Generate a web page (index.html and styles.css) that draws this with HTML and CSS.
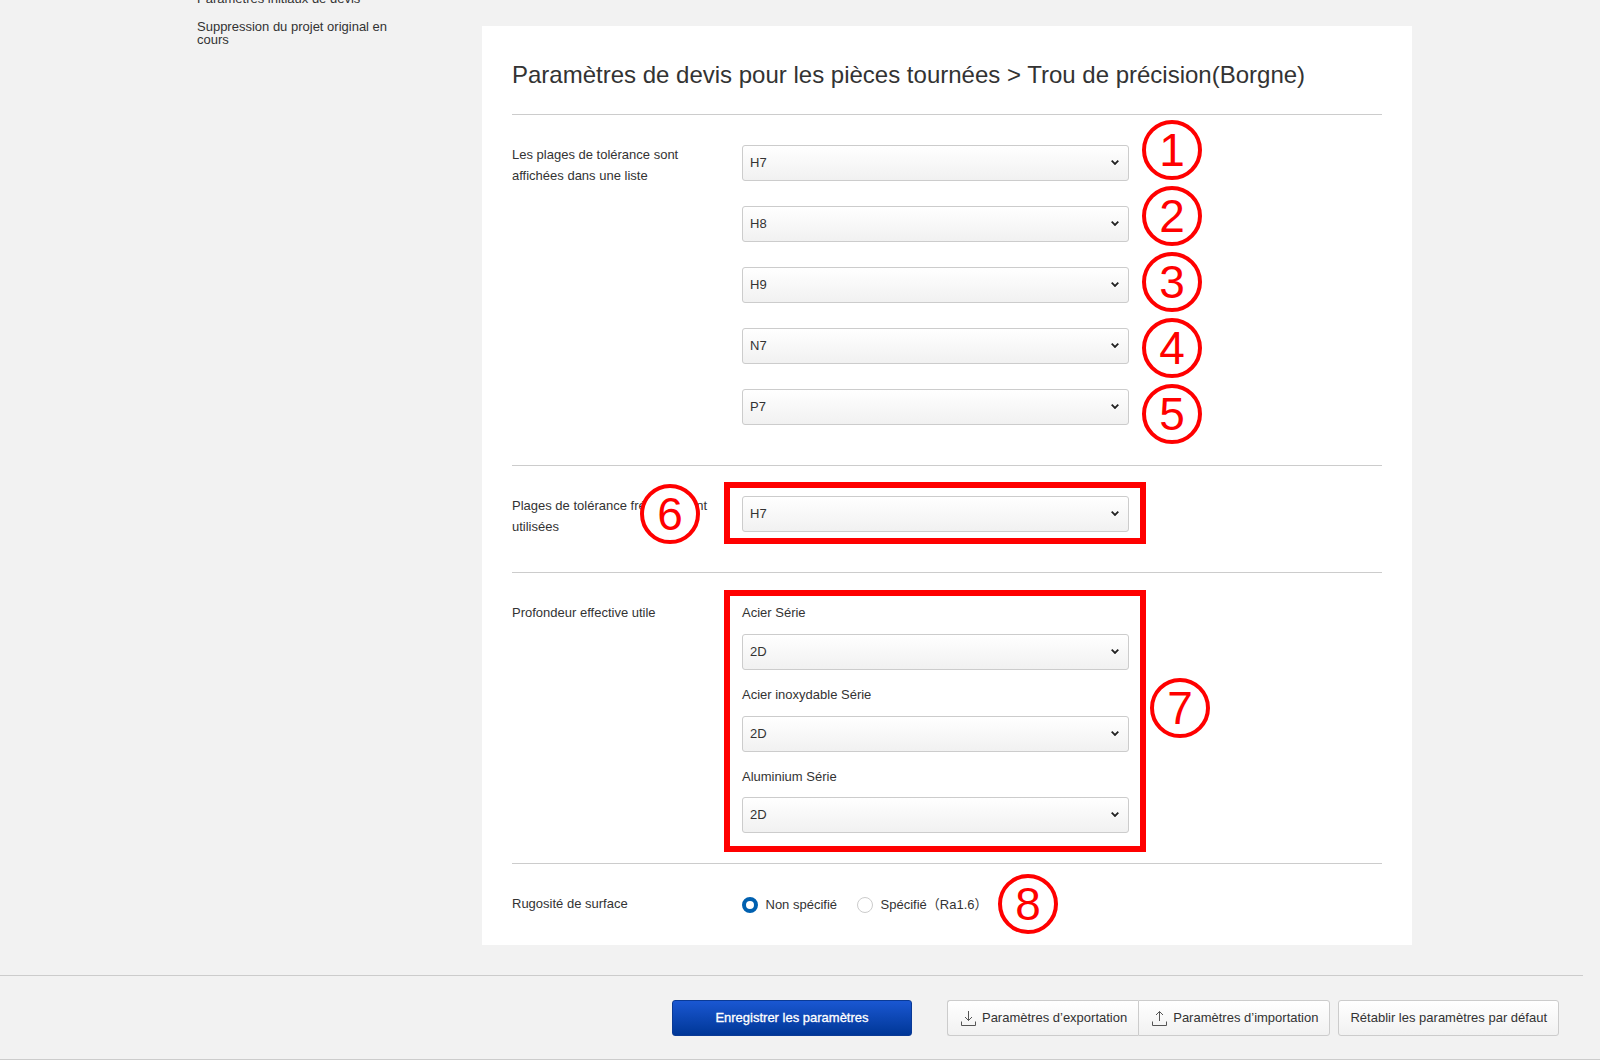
FILE: index.html
```html
<!DOCTYPE html>
<html lang="fr">
<head>
    <meta charset="UTF-8">
    <meta name="viewport" content="width=device-width, initial-scale=1">
    <title>Paramètres de devis</title>
    <link rel="stylesheet" href="styles.css">
</head>
<body>
    <div class="page">
        <div class="content">
            <aside class="sidebar">
                <a href="#" class="side-link">Paramètres initiaux de devis</a>
                <a href="#" class="side-link">Suppression du projet original en cours</a>
            </aside>
            <main class="panel">
                <h1>Paramètres de devis pour les pièces tournées &gt; Trou de précision(Borgne)</h1>

                <section class="row row-list">
                    <div class="row-label">Les plages de tolérance sont affichées dans une liste</div>
                    <div class="row-field">
                        <select><option>H7</option></select>
                        <select><option>H8</option></select>
                        <select><option>H9</option></select>
                        <select><option>N7</option></select>
                        <select><option>P7</option></select>
                    </div>
                </section>

                <section class="row">
                    <div class="row-label">Plages de tolérance fréquemment utilisées</div>
                    <div class="row-field">
                        <select><option>H7</option></select>
                    </div>
                </section>

                <section class="row row-depth">
                    <div class="row-label">Profondeur effective utile</div>
                    <div class="row-field">
                        <div class="sub-label">Acier Série</div>
                        <select><option>2D</option></select>
                        <div class="sub-label">Acier inoxydable Série</div>
                        <select><option>2D</option></select>
                        <div class="sub-label sub-label-last">Aluminium Série</div>
                        <select><option>2D</option></select>
                    </div>
                </section>

                <section class="row row-radio">
                    <div class="row-label">Rugosité de surface</div>
                    <div class="radio-group">
                        <label class="radio"><input type="radio" name="ra" checked>Non spécifié</label>
                        <label class="radio"><input type="radio" name="ra">Spécifié（Ra1.6）</label>
                    </div>
                </section>
            </main>
        </div>

        <footer class="actions">
            <button class="btn-save">Enregistrer les paramètres</button>
            <div class="btn-group">
                <button class="btn">
                    <svg class="btn-icon" width="15" height="16" viewBox="0 0 15 16"><path d="M7.5 1v9.5M4 7l3.5 3.5L11 7M.5 11.5v4h14v-4" /></svg>
                    Paramètres d’exportation
                </button>
                <button class="btn">
                    <svg class="btn-icon" width="15" height="16" viewBox="0 0 15 16"><path d="M7.5 11V1.5M4 5l3.5-3.5L11 5M.5 11.5v4h14v-4" /></svg>
                    Paramètres d’importation
                </button>
            </div>
            <button class="btn btn-reset">Rétablir les paramètres par défaut</button>
        </footer>
    </div>

    <!-- annotations drawn over the screenshot -->
    <div class="mark mark-1">1</div>
    <div class="mark mark-2">2</div>
    <div class="mark mark-3">3</div>
    <div class="mark mark-4">4</div>
    <div class="mark mark-5">5</div>
    <div class="mark mark-6">6</div>
    <div class="mark mark-7">7</div>
    <div class="mark mark-8">8</div>
    <div class="red-box red-box-a"></div>
    <div class="red-box red-box-b"></div>
</body>
</html>
```

FILE: styles.css
```css
* {
    box-sizing: border-box;
}

html, body {
    margin: 0;
    padding: 0;
    height: 1060px;
    overflow: hidden;
}

body {
    font-family: "Liberation Sans", "Noto Sans CJK JP", Arial, sans-serif;
    font-size: 13px;
    color: #333;
    background-color: #f2f2f2;
}

.page {
    width: 1600px;
    height: 1060px;
    border-bottom: 1px solid #ccc;
}

.content {
    display: flex;
    align-items: flex-start;
}

.sidebar {
    width: 482px;
    padding-left: 197px;
    padding-right: 90px;
    margin-top: -8px;
}

.side-link {
    display: block;
    color: #333;
    text-decoration: none;
    font-size: 13px;
    line-height: 13px;
    margin-bottom: 15px;
}

.panel {
    width: 930px;
    height: 919px;
    margin-top: 26px;
    padding: 0 30px;
    background-color: #fff;
}

h1 {
    margin: 0;
    height: 88px;
    padding-top: 34px;
    font-size: 24px;
    line-height: 30px;
    font-weight: 400;
    color: #333;
}

.row {
    display: flex;
    border-top: 1px solid #ccc;
    padding: 30px 0 40px;
}

/* label may run taller than the select beside it, it doesn't push the row */
.row-label {
    width: 230px;
    height: 36px;
    margin-top: -1px;
    padding-right: 30px;
    line-height: 21px;
    flex-shrink: 0;
}

.row-field {
    display: flex;
    flex-direction: column;
    width: 387px;
}

.row-list .row-field {
    gap: 25px;
}

.row-depth {
    padding-bottom: 30px;
}

.sub-label {
    line-height: 21px;
    margin-top: -1px;
    margin-bottom: 11px;
}

select + .sub-label {
    margin-top: 14px;
}

.sub-label-last {
    margin-bottom: 10px;
}

select {
    display: block;
    appearance: none;
    width: 387px;
    height: 36px;
    padding: 0 24px 2px 7px;
    border: 1px solid #ccc;
    border-radius: 3px;
    background-color: #f6f6f6;
    background-image: url("data:image/svg+xml,%3Csvg xmlns='http://www.w3.org/2000/svg' width='8' height='5' viewBox='0 0 8 5'%3E%3Cpath d='M.7.7L4 4l3.3-3.3' fill='none' stroke='%23222' stroke-width='1.8'/%3E%3C/svg%3E"), linear-gradient(#fff, #f1f1f1);
    background-repeat: no-repeat;
    background-position: right 9px top 14px, 0 0;
    font-family: inherit;
    font-size: 13px;
    color: #333;
}

.row-radio {
    padding: 30px 0 0;
    align-items: flex-start;
}

.radio-group {
    display: flex;
    gap: 20px;
    line-height: 21px;
}

.radio {
    display: flex;
    align-items: center;
    gap: 7.5px;
}

.radio input {
    appearance: none;
    width: 16px;
    height: 16px;
    margin: 0;
    border: 1px solid #ccc;
    border-radius: 50%;
    background-color: #fff;
}

.radio input:checked {
    border: 4px solid #0060b0;
}

.actions {
    display: flex;
    justify-content: flex-end;
    align-items: center;
    width: 1583px;
    height: 84px;
    margin-top: 30px;
    padding: 0 24px 0 0;
    border-top: 1px solid #ccc;
}

button {
    font-family: inherit;
    font-size: 13px;
    height: 36px;
    cursor: pointer;
}

.btn-save {
    width: 240px;
    margin-right: 35px;
    border: 1px solid #0a3a96;
    border-radius: 3px;
    background-image: linear-gradient(#1a57d2, #003797);
    color: #fff;
    -webkit-text-stroke: 0.3px #fff;
}

.btn-group {
    display: flex;
    margin-right: 8px;
}

.btn {
    display: flex;
    align-items: center;
    gap: 6px;
    padding: 0 11px 0 13px;
    border: 1px solid #ccc;
    border-radius: 3px;
    background-image: linear-gradient(#fff, #f1f1f1);
    color: #333;
}

.btn-group .btn:first-child {
    border-radius: 3px 0 0 3px;
    border-right: 0;
}

.btn-group .btn:last-child {
    border-radius: 0 3px 3px 0;
}

.btn-reset {
    padding: 0 11px;
}

.btn-icon {
    fill: none;
    stroke: #555;
    stroke-width: 1;
}

.mark {
    position: absolute;
    width: 60px;
    height: 60px;
    border: 4px solid #f00;
    border-radius: 50%;
    background-color: #fff;
    color: #f00;
    font-size: 46px;
    line-height: 52px;
    text-align: center;
}

.mark-1 { left: 1142px; top: 120px; }
.mark-2 { left: 1142px; top: 186px; }
.mark-3 { left: 1142px; top: 252px; }
.mark-4 { left: 1142px; top: 318px; }
.mark-5 { left: 1142px; top: 384px; }
.mark-6 { left: 640px; top: 484px; }
.mark-7 { left: 1150px; top: 678px; }
.mark-8 { left: 998px; top: 874px; }

.red-box {
    position: absolute;
    border: 6px solid #f00;
}

.red-box-a {
    left: 724px;
    top: 482px;
    width: 422px;
    height: 62px;
}

.red-box-b {
    left: 724px;
    top: 590px;
    width: 422px;
    height: 262px;
}
```
